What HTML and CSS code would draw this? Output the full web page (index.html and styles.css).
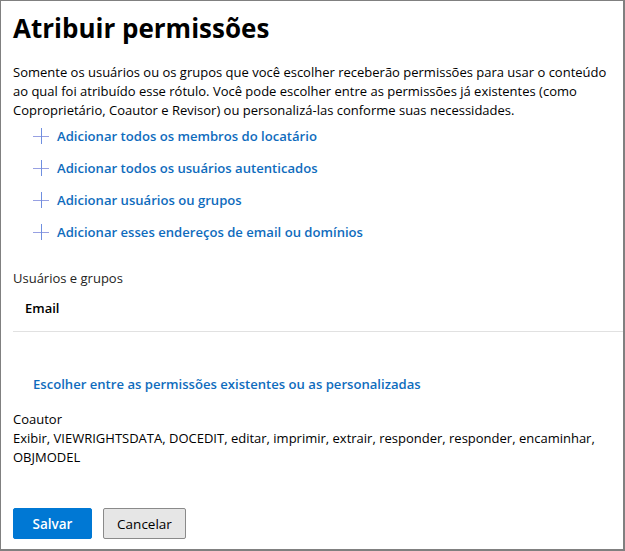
FILE: index.html
```html
<!DOCTYPE html>
<html lang="pt-BR">
<head>
<meta charset="utf-8">
<title>Atribuir permissões</title>
<link rel="stylesheet" href="styles.css">
</head>
<body>
<div class="panel">
  <h1 class="title">Atribuir permissões</h1>
  <p class="intro">Somente os usuários ou os grupos que você escolher receberão permissões para usar o conteúdo ao qual foi atribuído esse rótulo. Você pode escolher entre as permissões já existentes (como Coproprietário, Coautor e Revisor) ou personalizá-las conforme suas necessidades.</p>
  <ul class="actions">
    <li class="action"><svg class="plus" viewBox="0 0 16 16" width="16" height="16"><path d="M0 8.5H16" stroke="#97a0e2"/><path d="M8.5 0V16" stroke="#6f8fe0"/></svg><span class="link">Adicionar todos os membros do locatário</span></li>
    <li class="action"><svg class="plus" viewBox="0 0 16 16" width="16" height="16"><path d="M0 8.5H16" stroke="#97a0e2"/><path d="M8.5 0V16" stroke="#6f8fe0"/></svg><span class="link">Adicionar todos os usuários autenticados</span></li>
    <li class="action"><svg class="plus" viewBox="0 0 16 16" width="16" height="16"><path d="M0 8.5H16" stroke="#97a0e2"/><path d="M8.5 0V16" stroke="#6f8fe0"/></svg><span class="link">Adicionar usuários ou grupos</span></li>
    <li class="action"><svg class="plus" viewBox="0 0 16 16" width="16" height="16"><path d="M0 8.5H16" stroke="#97a0e2"/><path d="M8.5 0V16" stroke="#6f8fe0"/></svg><span class="link">Adicionar esses endereços de email ou domínios</span></li>
  </ul>
  <div class="section-label">Usuários e grupos</div>
  <div class="list-header">Email</div>
  <div class="choose"><span class="link">Escolher entre as permissões existentes ou as personalizadas</span></div>
  <div class="perm-name">Coautor</div>
  <div class="perm-rights">Exibir, VIEWRIGHTSDATA, DOCEDIT, editar, imprimir, extrair, responder, responder, encaminhar, OBJMODEL</div>
  <div class="buttons">
    <button class="btn btn-primary">Salvar</button>
    <button class="btn btn-default">Cancelar</button>
  </div>
</div>
</body>
</html>
```
FILE: styles.css
```css
html, body {
  margin: 0;
  padding: 0;
  background: #fff;
}
.panel {
  box-sizing: border-box;
  width: 625px;
  height: 551px;
  border-style: solid;
  border-color: #808080;
  border-width: 1px 2px 2px 1px;
  padding: 11px 12px 0 12px;
  font-family: "Open Sans", "Noto Sans", sans-serif;
  font-size: 13px;
  line-height: 19px;
  color: #000;
  display: flex;
  flex-direction: column;
}
.title {
  margin: 0;
  font-size: 26px;
  line-height: 33px;
  font-weight: 700;
  color: #000;
}
.intro {
  margin: 18px 0 0;
}
.actions {
  list-style: none;
  margin: 0;
  padding: 0 0 0 20px;
}
.action {
  display: flex;
  align-items: center;
  gap: 8px;
  height: 32px;
}
.plus {
  display: block;
  flex: none;
}
.link {
  color: #0f6cbd;
  font-weight: 600;
  font-size: 13.1px;
}
.section-label {
  margin-top: 21px;
  color: #252423;
}
.list-header {
  margin: 11px -12px 0 0;
  padding: 0 0 13px 12px;
  font-weight: 600;
  border-bottom: 1px solid #e1e1e1;
}
.choose {
  margin-top: 43px;
  padding-left: 20px;
}
.perm-name {
  margin-top: 16px;
}
.perm-rights {
  line-height: 18.5px;
}
.buttons {
  display: flex;
  gap: 11px;
  margin-top: 42px;
}
.btn {
  box-sizing: border-box;
  height: 31px;
  border-radius: 2px;
  font-family: "Open Sans", "Noto Sans", sans-serif;
  font-size: 13.5px;
  padding: 0;
  cursor: pointer;
}
.btn-primary {
  width: 79px;
  background: #0078d4;
  border: 1px solid #0078d4;
  color: #fff;
  font-weight: 600;
}
.btn-default {
  width: 83px;
  background: #e6e6e6;
  border: 1px solid #8a8a8a;
  color: #000;
}
```
